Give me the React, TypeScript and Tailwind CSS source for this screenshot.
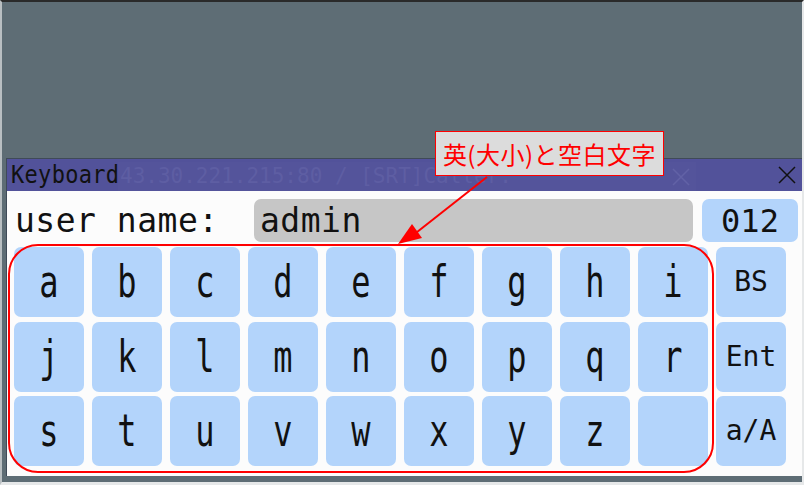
const mono = "font-['DejaVu_Sans_Mono','Liberation_Mono',monospace]";

const rows = [
  ["a", "b", "c", "d", "e", "f", "g", "h", "i"],
  ["j", "k", "l", "m", "n", "o", "p", "q", "r"],
  ["s", "t", "u", "v", "w", "x", "y", "z", ""],
];

const side = ["BS", "Ent", "a/A"];

const Key = ({ label }: { label: string }) => (
  <div className="flex h-[70px] w-[70px] items-center justify-center rounded-[7px] bg-[#b3d4fb]">
    <span className={`${mono} scale-y-140 text-[32px] leading-none text-[#111]`}>{label}</span>
  </div>
);

const App = () => {
  return (
    <div className="relative h-[485px] w-[804px] overflow-hidden border-t-2 border-r-2 border-b-[3px] border-l-2 border-t-[#2a2a2a] border-r-[#e6e8e9] border-b-[#e6e8e9] border-l-[#b9bfc2] bg-[#5e6d75]">
      <div className="flex h-full flex-col">
        <div className="h-[156px]" />

        <div className="ml-[4px] flex h-[318px] flex-col border-t border-l border-[#3f4a58] bg-[#fcfcfc]">
          <div className="relative flex h-[32px] items-center bg-[#52529a] pl-[4px]">
            <span className={`${mono} scale-y-115 text-[22px] leading-none tracking-[0.3px] text-[#111]`}>Keyboard</span>

            <div className="absolute left-[111px] top-[3px] flex h-[29px] w-[578px] items-center justify-between bg-[#54549b] pl-[2px] pr-[6px]">
              <span className={`${mono} text-[21px] leading-none text-[#5e5ea3]`}>
                43.30.221.215:80 / [SRT]Caller:
              </span>
              <svg width="18" height="18" viewBox="0 0 18 18" className="text-[#6262a6]">
                <path d="M1 1 L17 17 M17 1 L1 17" stroke="currentColor" strokeWidth="1.5" />
              </svg>
            </div>

            <svg width="18" height="18" viewBox="0 0 18 18" className="absolute right-[6px] top-[7px]">
              <path d="M1 1 L17 17 M17 1 L1 17" stroke="#111" strokeWidth="1.5" />
            </svg>
          </div>

          <div className="flex flex-col pl-[7px] pt-[8px]">
            <div className="flex h-[43px] items-center">
              <span className={`${mono} ml-[1px] w-[239px] text-[33px] leading-none tracking-[0.5px] text-[#111]`}>
                user name:
              </span>
              <div className="flex h-[43px] w-[439px] items-center rounded-[7px] bg-[#c6c6c6] pl-[6px]">
                <span className={`${mono} text-[33px] leading-none tracking-[0.5px] text-[#111]`}>admin</span>
              </div>
              <div className="ml-[9px] flex h-[43px] w-[96px] items-center justify-center rounded-[7px] bg-[#b3d4fb]">
                <span className={`${mono} text-[32px] leading-none text-[#111]`}>012</span>
              </div>
            </div>

            <div className="mt-[5px] flex gap-[8px]">
              <div className="flex flex-col gap-[4.5px]">
                {rows.map((r, i) => (
                  <div key={i} className="flex gap-[8px]">
                    {r.map((k, j) => (
                      <Key key={j} label={k} />
                    ))}
                  </div>
                ))}
              </div>
              <div className="flex flex-col gap-[4.5px]">
                {side.map((s) => (
                  <div key={s} className="flex h-[70px] w-[70px] items-center justify-center rounded-[7px] bg-[#b3d4fb]">
                    <span className={`${mono} text-[28px] leading-none text-[#111]`}>{s}</span>
                  </div>
                ))}
              </div>
            </div>
          </div>
        </div>
      </div>

      {/* annotation */}
      <div className="absolute left-[6px] top-[242px] h-[229px] w-[706px] rounded-[30px] border-2 border-[#ff0000]" />

      <div className="absolute left-[433px] top-[129px] flex h-[45px] w-[229px] items-center justify-center border border-[#ff0000] bg-[#dcdcdc]">
        <span className="font-['Noto_Sans_CJK_JP',sans-serif] text-[24px] leading-none tracking-[0.5px] text-[#ff0000]">
          英(大小)と空白文字
        </span>
      </div>

      <svg className="absolute left-0 top-0" width="804" height="485" viewBox="0 0 804 485">
        <line x1="485" y1="175" x2="410" y2="234" stroke="#ff0000" strokeWidth="2" />
        <polygon points="396,242 410,222 420,236" fill="#ff0000" />
      </svg>
    </div>
  );
};

export default App;
